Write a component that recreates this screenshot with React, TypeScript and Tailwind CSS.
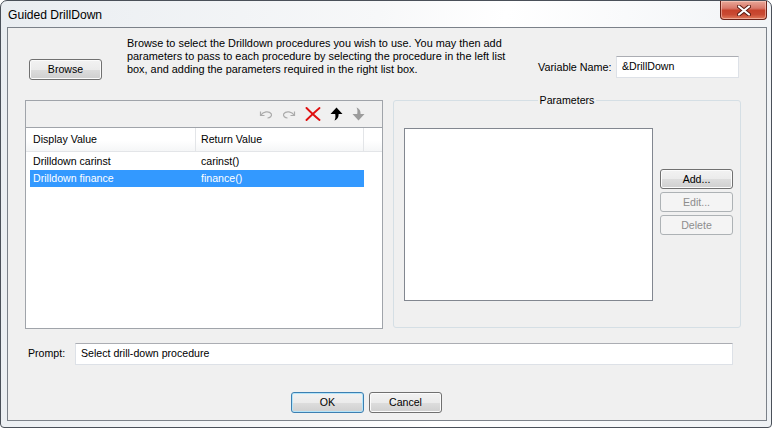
import React from "react";

type BtnProps = {
  children: React.ReactNode;
  className?: string;
  disabled?: boolean;
  isDefault?: boolean;
};

// Win7-style push button
const WinButton: React.FC<BtnProps> = ({ children, className = "", disabled = false, isDefault = false }) => {
  const look = disabled
    ? "border-[#adb2b5] bg-[#f4f4f4] text-[#8d8d8d]"
    : isDefault
    ? "border-[#3c7fb1] bg-[linear-gradient(to_bottom,#f2f2f2_0%,#ebebeb_50%,#dddddd_51%,#cfcfcf_100%)] shadow-[inset_0_0_0_1px_#b4e4f9]"
    : "border-[#707070] bg-[linear-gradient(to_bottom,#f2f2f2_0%,#ebebeb_50%,#dddddd_51%,#cfcfcf_100%)] shadow-[inset_0_0_0_1px_#fbfbfb]";
  return (
    <div className={`shrink-0 flex items-center justify-center rounded-[3px] border leading-none ${look} ${className}`}>
      {children}
    </div>
  );
};

const UndoIcon = ({ flip = false }: { flip?: boolean }) => (
  <svg width="14" height="9" viewBox="0 0 14 9" className={flip ? "-scale-x-100" : ""}>
    <polyline points="1.5,1.5 1.5,5.5 5.5,5.5" fill="none" stroke="#ababab" strokeWidth="1.2" />
    <path d="M1.8 5.2 C4 1.5 10 0.5 12.3 3.8 C13.2 6 11 8 8.5 8" fill="none" stroke="#ababab" strokeWidth="1.2" />
  </svg>
);

const DeleteIcon = () => (
  <svg width="16" height="14" viewBox="0 0 16 14">
    <path d="M1.5 1 C5 4.5 9 8.5 14.5 13" fill="none" stroke="#e01010" strokeWidth="1.9" strokeLinecap="round" />
    <path d="M14.5 1 C11 4 6 8.5 1.5 13" fill="none" stroke="#e01010" strokeWidth="1.9" strokeLinecap="round" />
  </svg>
);

const MoveIcon = ({ down = false }: { down?: boolean }) => (
  <svg width="13" height="14" viewBox="0 0 13 14" className={down ? "-scale-y-100" : ""}>
    <path
      d="M6.5 0.5 L12.5 7 L8.6 7 C8.6 9.8 8 12 4.5 13.5 C5.6 11.5 5.6 9.4 5.2 7 L0.5 7 Z"
      fill={down ? "#9c9c9c" : "#000"}
    />
  </svg>
);

export default function App() {
  return (
    <div className="w-[777px] h-[431px] bg-white font-['Liberation_Sans',Arial,sans-serif] text-[10.6px] text-black">
      {/* window frame */}
      <div className="w-[772px] h-[428px] flex flex-col rounded-t-[7px] rounded-b-[4px] border border-[#4a5059] bg-[linear-gradient(100deg,#e9edf1_0%,#f7f8f9_45%,#ffffff_60%,#eef1f4_100%)] pl-[6px] pr-[4px] pb-[6px]">
        {/* title bar */}
        <div className="h-[26px] flex items-start">
          <span className="mt-[8px] ml-[1px] text-[12.1px] leading-[13px]">Guided DrillDown</span>
          <div className="ml-auto w-[47px] h-[19px] flex items-center justify-center rounded-b-[4px] border border-t-0 border-[#6b2218] bg-[linear-gradient(to_bottom,#e9a898_0%,#d9786a_40%,#c6422b_52%,#c94a33_75%,#e07a5c_100%)] shadow-[inset_0_0_0_1px_rgba(255,220,210,0.5)]">
            <svg width="14" height="11" viewBox="0 0 14 11">
              <path d="M2 1.5 L12 9.5 M12 1.5 L2 9.5" stroke="#5a1a10" strokeWidth="4" strokeLinecap="round" />
              <path d="M2 1.5 L12 9.5 M12 1.5 L2 9.5" stroke="#ffffff" strokeWidth="2.2" strokeLinecap="round" />
            </svg>
          </div>
        </div>

        {/* client area */}
        <div className="flex-1 flex flex-col border border-[#7b8189] bg-[#f0f0f0]">
          {/* top section */}
          <div className="h-[72px] flex items-start">
            <WinButton className="ml-[21px] mt-[31px] w-[73px] h-[21px]">Browse</WinButton>
            <p className="shrink-0 ml-[25px] mt-[9px] text-[10.9px] leading-[13px] whitespace-nowrap">
              Browse to select the Drilldown procedures you wish to use. You may then add
              <br />
              parameters to pass to each procedure by selecting the procedure in the left list
              <br />
              box, and adding the parameters required in the right list box.
            </p>
            <div className="ml-auto mr-[27px] mt-[28px] flex items-center shrink-0">
              <span className="w-[78px] whitespace-nowrap text-[10.8px]">Variable Name:</span>
              <div className="w-[123px] h-[22px] flex items-center pl-[5px] bg-white border border-[#dde1e7] border-t-[#abadb3]">
                &amp;DrillDown
              </div>
            </div>
          </div>

          {/* middle section */}
          <div className="flex items-start pl-[17px]">
            {/* procedures list */}
            <div className="shrink-0 w-[358px] h-[229px] flex flex-col border border-[#a0a4aa]">
              <div className="h-[27px] flex items-center justify-end gap-[9px] pr-[17px] border-b border-[#a0a4aa]">
                <UndoIcon />
                <UndoIcon flip />
                <DeleteIcon />
                <MoveIcon />
                <MoveIcon down />
              </div>
              <div className="flex-1 bg-white flex flex-col">
                <div className="h-[24px] flex border-b border-[#e3e5e8] bg-[linear-gradient(to_bottom,#ffffff_0%,#ffffff_55%,#f5f6f7_100%)]">
                  <div className="w-[170px] flex items-center pl-[7px] border-r border-[#e3e5e8]">Display Value</div>
                  <div className="w-[168px] flex items-center pl-[5px] border-r border-[#e3e5e8]">Return Value</div>
                  <div className="flex-1" />
                </div>
                <div className="mt-[1px] h-[17px] flex items-center">
                  <span className="w-[170px] pl-[7px]">Drilldown carinst</span>
                  <span className="pl-[5px]">carinst()</span>
                </div>
                <div className="ml-[4px] w-[334px] h-[17px] flex items-center bg-[#3399ff] text-white">
                  <span className="w-[166px] pl-[3px]">Drilldown finance</span>
                  <span className="pl-[5px]">finance()</span>
                </div>
              </div>
            </div>

            {/* parameters group */}
            <fieldset className="shrink-0 ml-[10px] -mt-[6px] w-[348px] h-[234px] rounded-[3px] border border-[#d5dfe5]">
              <legend className="mx-auto px-[2px] leading-[13px]">Parameters</legend>
              <div className="flex items-start pl-[10px] mt-[21px]">
                <div className="w-[249px] h-[173px] bg-white border border-[#828790]" />
                <div className="ml-[7px] mt-[41px] flex flex-col gap-[3px]">
                  <WinButton className="w-[73px] h-[20px]">Add...</WinButton>
                  <WinButton disabled className="w-[73px] h-[20px]">Edit...</WinButton>
                  <WinButton disabled className="w-[73px] h-[20px]">Delete</WinButton>
                </div>
              </div>
            </fieldset>
          </div>

          {/* prompt */}
          <div className="mt-[14px] flex items-center pl-[20px]">
            <span className="w-[47px]">Prompt:</span>
            <div className="w-[658px] h-[22px] flex items-center pl-[5px] bg-white border border-[#dde1e7] border-t-[#abadb3]">
              Select drill-down procedure
            </div>
          </div>

          {/* dialog buttons */}
          <div className="mt-[27px] flex gap-[5px] pl-[283px]">
            <WinButton isDefault className="w-[73px] h-[21px]">OK</WinButton>
            <WinButton className="w-[73px] h-[21px]">Cancel</WinButton>
          </div>
        </div>
      </div>
    </div>
  );
}
